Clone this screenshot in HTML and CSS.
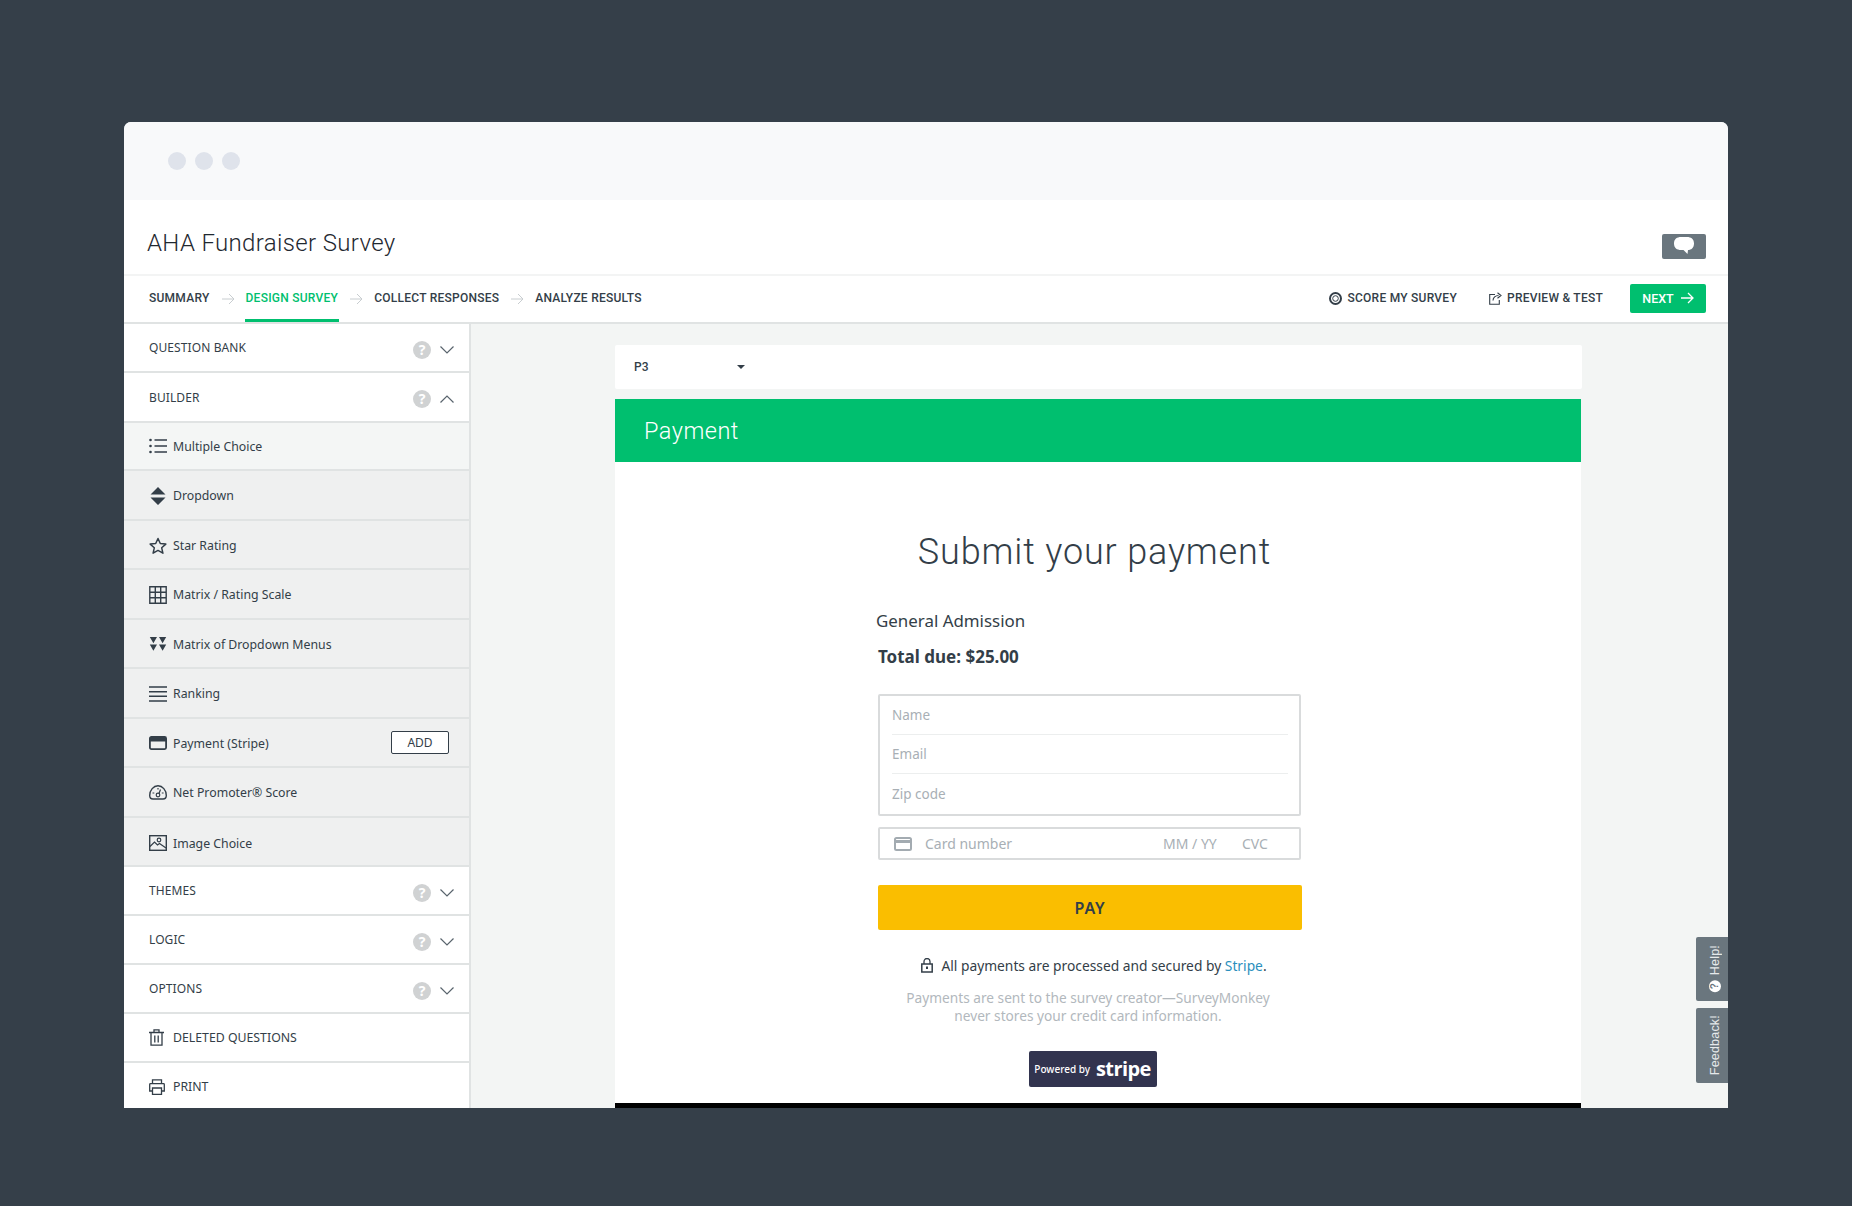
FILE: index.html
```html
<!DOCTYPE html>
<html lang="en">
<head>
<meta charset="utf-8">
<title>AHA Fundraiser Survey</title>
<link rel="stylesheet" href="styles.css">
</head>
<body>
<div class="window">
  <div class="chrome">
    <span class="dot"></span><span class="dot"></span><span class="dot"></span>
  </div>
  <header class="titlebar">
    <h1 class="survey-title">AHA Fundraiser Survey</h1>
    <button class="chat-btn" aria-label="Comments">
      <svg width="20" height="18" viewBox="0 0 20 18"><path d="M7 0h6c4 0 7 2 7 6.500S17 13 14 13l-.5 4-4-4H7C3 13 0 11 0 6.500S3 0 7 0z" fill="#fff"/></svg>
    </button>
  </header>
  <nav class="navbar">
    <div class="steps">
      <a class="step">SUMMARY</a>
      <svg class="step-arrow" width="13" height="12" viewBox="0 0 13 12"><path d="M0 6h12M7 1l5 5-5 5" fill="none" stroke="#c8cdd0" stroke-width="1"/></svg>
      <a class="step step-active">DESIGN SURVEY</a>
      <svg class="step-arrow" width="13" height="12" viewBox="0 0 13 12"><path d="M0 6h12M7 1l5 5-5 5" fill="none" stroke="#c8cdd0" stroke-width="1"/></svg>
      <a class="step">COLLECT RESPONSES</a>
      <svg class="step-arrow" width="13" height="12" viewBox="0 0 13 12"><path d="M0 6h12M7 1l5 5-5 5" fill="none" stroke="#c8cdd0" stroke-width="1"/></svg>
      <a class="step">ANALYZE RESULTS</a>
    </div>
    <div class="actions">
      <a class="action">
        <svg width="13" height="13" viewBox="0 0 13 13"><circle cx="6.500" cy="6.500" r="5.500" fill="none" stroke="#333e48" stroke-width="2"/><circle cx="6.500" cy="6.500" r="2.800" fill="none" stroke="#333e48" stroke-width="1"/></svg>
        SCORE MY SURVEY
      </a>
      <a class="action">
        <svg width="13" height="13" viewBox="0 0 13 13"><path d="M6 2.500H.7v9.800h9.600V8M4 8.500C4 5.500 6.500 3.500 9.500 3.500M8.500.7l3.500 2.800-3.500 2.800" fill="none" stroke="#333e48" stroke-width="1.100"/></svg>
        PREVIEW &amp; TEST
      </a>
      <button class="next-btn">NEXT
        <svg width="13" height="12" viewBox="0 0 13 12"><path d="M0 6h12M7 1l5 5-5 5" fill="none" stroke="#fff" stroke-width="1.300"/></svg>
      </button>
    </div>
  </nav>
  <div class="workspace">
    <aside class="sidebar">
      <div class="row row-head row-top">
        <span class="head-label">QUESTION BANK</span>
        <span class="help">?</span>
        <svg class="chev" width="14" height="8" viewBox="0 0 14 8"><path d="M.5.500 7 7 13.500.500" fill="none" stroke="#59646d" stroke-width="1.200"/></svg>
      </div>
      <div class="row row-head row-h50">
        <span class="head-label">BUILDER</span>
        <span class="help">?</span>
        <svg class="chev" width="14" height="8" viewBox="0 0 14 8"><path d="M.5 7.500 7 1l6.500 6.500" fill="none" stroke="#59646d" stroke-width="1.200"/></svg>
      </div>
      <div class="row row-item row-first">
        <svg class="ico" width="18" height="16" viewBox="0 0 18 16"><path d="M5.500 2h12.500M5.500 8h12.500M5.500 14h12.500" stroke="#333e48" stroke-width="1.400"/><circle cx="1.500" cy="2" r="1.300" fill="#333e48"/><circle cx="1.500" cy="8" r="1.300" fill="#333e48"/><circle cx="1.500" cy="14" r="1.300" fill="#333e48"/></svg>
        <span class="item-label">Multiple Choice</span>
      </div>
      <div class="row row-item">
        <svg class="ico" width="18" height="18" viewBox="0 0 18 18"><path d="M9 0l7.500 7.400H1.500zM1.500 10.400h15L9 18z" fill="#333e48"/></svg>
        <span class="item-label">Dropdown</span>
      </div>
      <div class="row row-item">
        <svg class="ico" width="18" height="17" viewBox="0 0 18 17"><path d="M9 1.500l2.300 5 5.500.6-4.100 3.700 1.200 5.400L9 13.400l-4.900 2.800 1.200-5.400L1.200 7.100l5.500-.6z" fill="none" stroke="#333e48" stroke-width="1.500" stroke-linejoin="round"/></svg>
        <span class="item-label">Star Rating</span>
      </div>
      <div class="row row-item">
        <svg class="ico" width="18" height="18" viewBox="0 0 18 18"><path d="M.8.800h16.400v16.400H.8zM6.300.800v16.400M11.700.800v16.400M.8 6.300h16.400M.8 11.700h16.400" fill="none" stroke="#333e48" stroke-width="1.400"/></svg>
        <span class="item-label">Matrix / Rating Scale</span>
      </div>
      <div class="row row-item">
        <svg class="ico" width="18" height="14" viewBox="0 0 18 14"><path d="M.8 0h7.200L4.400 6.200zM10 0h7.200l-3.600 6.200zM.8 7.500h7.200L4.400 13.800zM10 7.500h7.200l-3.600 6.300z" fill="#333e48"/></svg>
        <span class="item-label">Matrix of Dropdown Menus</span>
      </div>
      <div class="row row-item">
        <svg class="ico" width="18" height="16" viewBox="0 0 18 16"><path d="M0 1h18M0 5.700h18M0 10.300h18M0 15h18" stroke="#333e48" stroke-width="1.400"/></svg>
        <span class="item-label">Ranking</span>
      </div>
      <div class="row row-item">
        <svg class="ico" width="18" height="14" viewBox="0 0 18 14"><rect x=".9" y=".9" width="16.200" height="12.200" rx="1.500" fill="none" stroke="#333e48" stroke-width="1.800"/><rect x="1" y="1" width="16" height="4.500" fill="#333e48"/></svg>
        <span class="item-label">Payment (Stripe)</span>
        <button class="add-btn">ADD</button>
      </div>
      <div class="row row-item">
        <svg class="ico" width="18" height="15" viewBox="0 0 18 15"><path d="M4 14h10c2 0 3.300-1 3.300-3.500C17.300 5 13.500.8 9 .8S.7 5 .7 10.500C.7 13 2 14 4 14z" fill="none" stroke="#333e48" stroke-width="1.400"/><circle cx="9" cy="10" r="1.800" fill="none" stroke="#333e48" stroke-width="1.200"/><path d="M10 8.500l1.500-4M3.500 8h1.800M12.800 8h1.800M9 3v1.500" stroke="#333e48" stroke-width="1.200"/></svg>
        <span class="item-label">Net Promoter® Score</span>
      </div>
      <div class="row row-item row-low">
        <svg class="ico" width="18" height="16" viewBox="0 0 18 16"><rect x=".7" y=".7" width="16.600" height="14.600" fill="none" stroke="#333e48" stroke-width="1.400"/><path d="M1 11.500l4.500-4.500 3 3 2-1.500 6.500 4.500" fill="none" stroke="#333e48" stroke-width="1.200"/><circle cx="10" cy="5" r="1.800" fill="none" stroke="#333e48" stroke-width="1.200"/></svg>
        <span class="item-label">Image Choice</span>
      </div>
      <div class="row row-head">
        <span class="head-label">THEMES</span>
        <span class="help">?</span>
        <svg class="chev" width="14" height="8" viewBox="0 0 14 8"><path d="M.5.500 7 7 13.500.500" fill="none" stroke="#59646d" stroke-width="1.200"/></svg>
      </div>
      <div class="row row-head">
        <span class="head-label">LOGIC</span>
        <span class="help">?</span>
        <svg class="chev" width="14" height="8" viewBox="0 0 14 8"><path d="M.5.500 7 7 13.500.500" fill="none" stroke="#59646d" stroke-width="1.200"/></svg>
      </div>
      <div class="row row-head">
        <span class="head-label">OPTIONS</span>
        <span class="help">?</span>
        <svg class="chev" width="14" height="8" viewBox="0 0 14 8"><path d="M.5.500 7 7 13.500.500" fill="none" stroke="#59646d" stroke-width="1.200"/></svg>
      </div>
      <div class="row row-plain">
        <svg class="ico" width="16" height="17" viewBox="0 0 16 17"><path d="M0 3.500h15M5 3.500V.8h5v2.700M2 3.500v12.700h11V3.500M5.800 6.500v7M9.200 6.500v7" fill="none" stroke="#333e48" stroke-width="1.300"/></svg>
        <span class="item-label">DELETED QUESTIONS</span>
      </div>
      <div class="row row-plain">
        <svg class="ico" width="16" height="16" viewBox="0 0 16 16"><path d="M3.500 5V.8h9V5M3.500 12H.7V5.500c0-.5.300-.8.800-.8h13c.5 0 .8.300.8.800V12h-2.800M3.500 9h9v6.300h-9z" fill="none" stroke="#333e48" stroke-width="1.300"/></svg>
        <span class="item-label">PRINT</span>
      </div>
    </aside>
    <main class="canvas">
      <div class="page-select">
        <span class="page-name">P3</span>
        <span class="caret"></span>
      </div>
      <section class="payment-card">
        <div class="payment-band">Payment</div>
        <div class="payment-body">
          <h2 class="payment-title">Submit your payment</h2>
          <div class="payment-col">
            <p class="ticket">General Admission</p>
            <p class="total">Total due: $25.00</p>
            <div class="fields">
              <div class="field">Name</div>
              <div class="field">Email</div>
              <div class="field field-last">Zip code</div>
            </div>
            <div class="card-field">
              <svg width="18" height="14" viewBox="0 0 18 14"><rect x="1" y="1" width="16" height="12" rx="1.500" fill="none" stroke="#a3abb1" stroke-width="2"/><rect x="1" y="3" width="16" height="3" fill="#a3abb1"/></svg>
              <span class="card-number">Card number</span>
              <span class="card-exp">MM / YY</span>
              <span class="card-cvc">CVC</span>
            </div>
            <button class="pay-btn">PAY</button>
            <p class="secure"><svg class="lock" width="12" height="15" viewBox="0 0 12 15"><path d="M3 6V3.500a3 3 0 0 1 6 0V6" fill="none" stroke="#333e48" stroke-width="1.300"/><rect x=".8" y="6" width="10.400" height="8" fill="none" stroke="#333e48" stroke-width="1.500"/><rect x="5" y="8.500" width="2" height="2.500" fill="#333e48"/></svg>All payments are processed and secured by <a class="stripe-link">Stripe</a>.</p>
            <p class="note">Payments are sent to the survey creator—SurveyMonkey<br>never stores your credit card information.</p>
            <div class="badge-wrap">
              <div class="stripe-badge"><span class="powered">Powered by</span><span class="stripe-word">stripe</span></div>
            </div>
          </div>
        </div>
        <div class="card-foot"></div>
      </section>
    </main>
    <div class="tab tab-help"><span class="tab-text"><span class="tab-q">?</span>Help!</span></div>
    <div class="tab tab-feedback"><span class="tab-text">Feedback!</span></div>
  </div>
</div>
</body>
</html>
```

FILE: styles.css
```css
* { box-sizing: border-box; }
html, body { margin: 0; height: 100%; }
body {
  background: #353f49;
  padding: 122px 124px 0;
  font-family: "Noto Sans", "Open Sans", sans-serif;
  color: #333e48;
  overflow: hidden;
}
p, h1, h2 { margin: 0; font-weight: 400; }
button { font-family: inherit; border: 0; padding: 0; }

.window {
  width: 1604px;
  height: 986px;
  background: #fff;
  border-radius: 7px 7px 0 0;
  overflow: hidden;
  display: flex;
  flex-direction: column;
}
.chrome {
  height: 78px;
  background: #f8f9fa;
  display: flex;
  align-items: center;
  gap: 9px;
  padding-left: 44px;
  flex: none;
}
.dot { width: 18px; height: 18px; border-radius: 50%; background: #dfe3eb; }

.titlebar {
  height: 76px;
  flex: none;
  display: flex;
  align-items: center;
  justify-content: space-between;
  padding: 12px 22px 0 23px;
  border-bottom: 2px solid #f3f4f4;
}
.survey-title {
  font-family: Roboto, sans-serif;
  font-weight: 300;
  font-size: 24px;
  letter-spacing: .35px;
  color: #1f2830;
}
.chat-btn {
  width: 44px;
  height: 25px;
  margin-top: 6px;
  background: #6a767e;
  border-radius: 2px;
  display: flex;
  align-items: center;
  justify-content: center;
}

.navbar {
  height: 48px;
  flex: none;
  display: flex;
  align-items: stretch;
  justify-content: space-between;
  padding: 0 22px 0 24px;
  border-bottom: 2px solid #e0e3e3;
}
.steps { display: flex; align-items: stretch; }
.step {
  display: flex;
  align-items: center;
  padding: 0 1px;
  margin-top: 1px;
  font-family: Roboto, sans-serif;
  font-size: 12px;
  font-weight: 500;
  letter-spacing: .25px;
  color: #333e48;
  border-bottom: 3px solid transparent;
}
.step-active { color: #00bf6f; border-bottom-color: #00bf6f; }
.step-arrow { align-self: center; margin: 0 10px 0 11px; }
.actions { display: flex; align-items: center; padding-bottom: 2px; }
.action {
  display: flex;
  align-items: center;
  gap: 5px;
  margin-right: 27px;
  font-family: Roboto, sans-serif;
  font-size: 12px;
  font-weight: 500;
  letter-spacing: .25px;
}
.action:first-child { margin-right: 32px; }
.next-btn {
  width: 76px;
  height: 29px;
  background: #00bf6f;
  color: #fff;
  border-radius: 2px;
  font-family: Roboto, sans-serif;
  font-size: 12.500px;
  font-weight: 500;
  display: flex;
  align-items: center;
  justify-content: center;
  gap: 7px;
}

.workspace { flex: 1; min-height: 0; display: flex; position: relative; background: #f3f5f4; }
.sidebar {
  width: 347px;
  flex: none;
  background: #fff;
  border-right: 2px solid #e0e3e3;
}
.row {
  height: 49px;
  display: flex;
  align-items: center;
  padding: 0 15px 0 25px;
  border-bottom: 2px solid #e0e3e3;
}
.row-top { height: 49px; }
.row-h50 { height: 50px; }
.row-item { height: 49.500px; background: #eff0f0; padding-top: 2px; }
.row-first { height: 48px; background: #f4f6f5; padding-top: 0; }
.row-low { padding-top: 4px; }
.row-plain { height: 49px; }
.head-label {
  flex: 1;
  font-size: 12px;
  letter-spacing: .1px;
  color: #333e48;
}
.help {
  flex: none;
  width: 18px;
  height: 18px;
  margin-top: 4px;
  border-radius: 50%;
  background: #d0d2d3;
  color: #fff;
  font-size: 14px;
  font-weight: 700;
  line-height: 18px;
  text-align: center;
}
.chev { flex: none; margin: 4px 0 0 9px; }
.ico { flex: none; margin-right: 6px; }
.row-plain .ico { margin-right: 8px; }
.item-label { font-size: 12.300px; color: #333e48; }
.add-btn {
  width: 58px;
  height: 23px;
  margin-left: auto;
  margin-right: 5px;
  margin-top: -2px;
  background: #fff;
  border: 1.500px solid #333e48;
  border-radius: 2px;
  font-size: 12px;
  color: #333e48;
}

.canvas { flex: 1; padding: 21px 0 0 144px; display: flex; flex-direction: column; min-width: 0; }
.page-select {
  width: 967px;
  height: 44px;
  flex: none;
  background: #fff;
  border-radius: 2px;
  display: flex;
  align-items: center;
  padding-left: 19px;
}
.page-name { font-family: Roboto, sans-serif; font-size: 12px; font-weight: 500; width: 103px; }
.caret {
  width: 0;
  height: 0;
  border-left: 4px solid transparent;
  border-right: 4px solid transparent;
  border-top: 4px solid #333e48;
}
.payment-card {
  width: 966px;
  margin-top: 10px;
  flex: 1;
  min-height: 0;
  background: #fff;
  display: flex;
  flex-direction: column;
}
.payment-band {
  height: 63px;
  flex: none;
  background: #00bf6f;
  color: #fff;
  padding-left: 29px;
  font-family: Roboto, sans-serif;
  font-weight: 300;
  font-size: 23.500px;
  letter-spacing: .5px;
  line-height: 65px;
}
.payment-body { flex: 1; min-height: 0; padding-left: 263px; }
.payment-title {
  width: 433px;
  margin: 67px 0 0 0;
  text-align: center;
  font-family: Roboto, sans-serif;
  font-weight: 300;
  font-size: 36px;
  letter-spacing: .85px;
  line-height: 46px;
  color: #333e48;
}
.payment-col { width: 425px; margin-top: 34px; }
.ticket { font-size: 16.900px; line-height: 24px; margin-left: -2px; }
.total { font-size: 17px; font-weight: 700; line-height: 24px; margin-top: 12px; }
.fields {
  margin-top: 25px;
  width: 423px;
  height: 122px;
  border: 2px solid #d9dbdc;
  border-radius: 2px;
  padding: 0 11px 0 12px;
}
.field {
  height: 39px;
  border-bottom: 1px solid #eceeee;
  font-size: 13.500px;
  color: #a8afb5;
  display: flex;
  align-items: center;
}
.field-last { border-bottom: 0; }
.card-field {
  width: 423px;
  height: 33px;
  margin-top: 11px;
  border: 2px solid #d9dbdc;
  border-radius: 2px;
  display: flex;
  align-items: center;
  font-size: 14px;
  color: #a8afb5;
  padding-left: 14px;
}
.card-number { margin-left: 13px; width: 238px; }
.card-exp { width: 79px; }
.pay-btn {
  display: block;
  width: 424px;
  height: 45px;
  margin-top: 25px;
  background: #fabe00;
  border-radius: 2px;
  font-size: 16px;
  font-weight: 600;
  letter-spacing: .8px;
  color: #333e48;
}
.secure {
  width: 424px;
  margin-top: 24px;
  padding-left: 8px;
  text-align: center;
  font-size: 13.800px;
  line-height: 24px;
  white-space: nowrap;
}
.lock { margin-right: 8px; vertical-align: -2px; }
.stripe-link { color: #2a8fbd; }
.note {
  width: 420px;
  margin-top: 11px;
  text-align: center;
  font-size: 13.700px;
  line-height: 18px;
  color: #b2b8bd;
}
.badge-wrap { width: 424px; display: flex; justify-content: center; margin-top: 26px; padding-left: 5px; }
.stripe-badge {
  width: 128px;
  height: 36px;
  background: #32344f;
  border-radius: 2px;
  color: #fff;
  display: flex;
  align-items: center;
  justify-content: center;
  gap: 6px;
}
.powered { font-size: 10px; font-weight: 500; }
.stripe-word { font-family: "Open Sans", sans-serif; font-size: 20px; font-weight: 700; letter-spacing: -.6px; line-height: 20px; }
.card-foot { height: 5px; background: #000; flex: none; }

.tab {
  position: absolute;
  right: 0;
  width: 32px;
  padding-left: 6px;
  background: #6a767e;
  border-radius: 2px 0 0 2px;
  display: flex;
  align-items: center;
  justify-content: center;
}
.tab-help { top: 613px; height: 64px; }
.tab-feedback { top: 684px; height: 75px; }
.tab-text {
  writing-mode: vertical-rl;
  transform: rotate(180deg);
  font-family: "Liberation Sans", sans-serif;
  font-size: 12.500px;
  letter-spacing: .2px;
  color: #e6e9ea;
  display: flex;
  align-items: center;
}
.tab-q {
  width: 12px;
  height: 12px;
  margin-bottom: 5px;
  border-radius: 50%;
  background: #fff;
  color: #6a767e;
  font-size: 10px;
  font-weight: 700;
  line-height: 12px;
  text-align: center;
}
```
